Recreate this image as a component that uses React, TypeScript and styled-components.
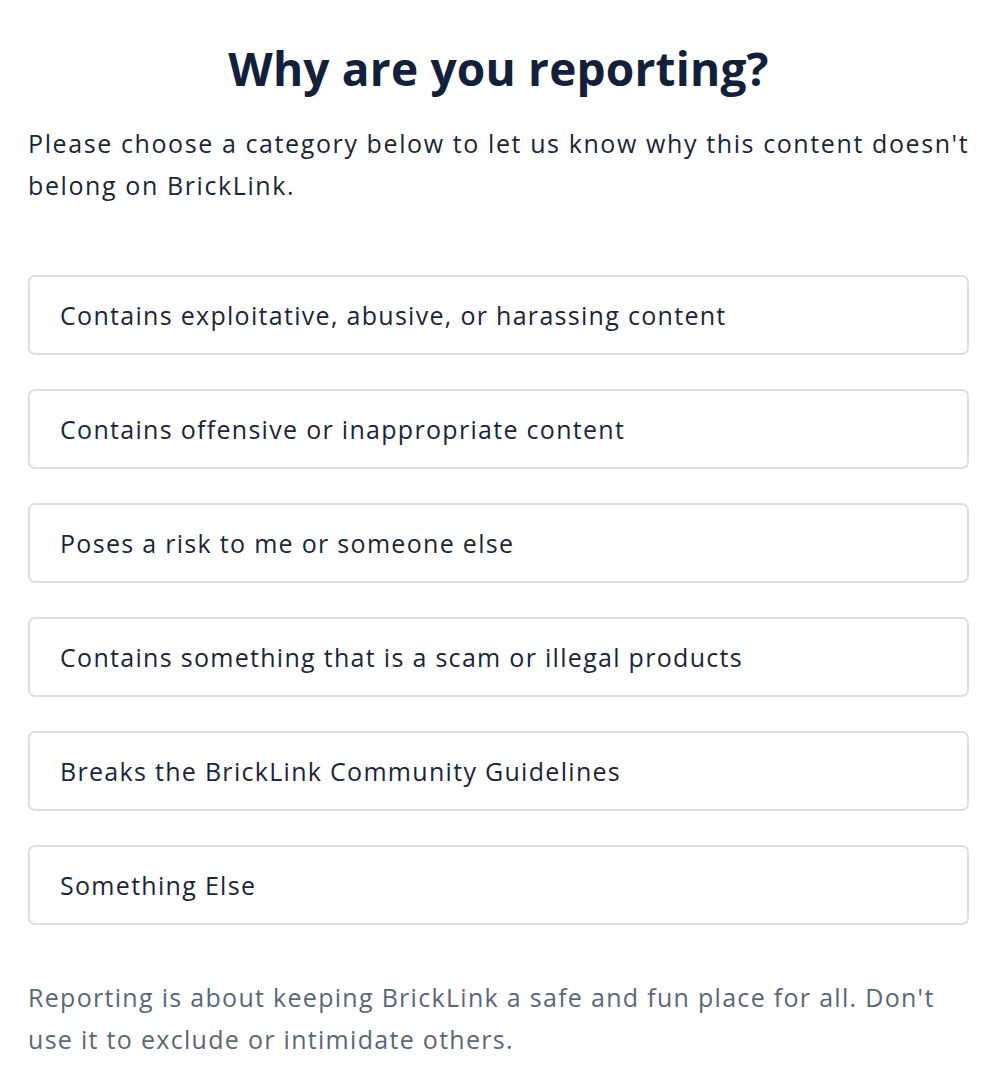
import React from "react";
import styled, { createGlobalStyle } from "styled-components";

const GlobalStyle = createGlobalStyle`
  html, body {
    margin: 0;
    padding: 0;
    background: #ffffff;
  }
  body {
    font-family: "Open Sans", "Noto Sans", sans-serif;
    -webkit-font-smoothing: antialiased;
  }
  * { box-sizing: border-box; }
`;

const Page = styled.main`
  width: 995px;
  padding: 40px 26px 0 28px;
  display: flex;
  flex-direction: column;
`;

const Title = styled.h1`
  margin: 0;
  text-align: center;
  font-size: 46px;
  line-height: 56px;
  font-weight: 700;
  color: #13203a;
  letter-spacing: 0.2px;
`;

const Intro = styled.p`
  margin: 26px -20px 0 0;
  font-size: 25px;
  line-height: 42px;
  letter-spacing: 1.6px;
  color: #1b2538;
`;

const OptionList = styled.div`
  margin-top: 69px;
  display: flex;
  flex-direction: column;
  gap: 34px;
`;

const OptionButton = styled.button`
  display: flex;
  align-items: center;
  width: 941px;
  height: 80px;
  padding: 0 30px;
  background: #ffffff;
  border: 2px solid #dfdfe3;
  border-radius: 7px;
  font-family: inherit;
  font-size: 25px;
  letter-spacing: 1.3px;
  color: #1b2538;
  text-align: left;
  cursor: pointer;
`;

const Footnote = styled.p`
  margin: 51px 0 0;
  font-size: 25px;
  line-height: 42px;
  letter-spacing: 1.3px;
  color: #5b6677;
`;

const reasons = [
  "Contains exploitative, abusive, or harassing content",
  "Contains offensive or inappropriate content",
  "Poses a risk to me or someone else",
  "Contains something that is a scam or illegal products",
  "Breaks the BrickLink Community Guidelines",
  "Something Else",
];

export default function App() {
  return (
    <>
      <GlobalStyle />
      <Page>
        <Title>Why are you reporting?</Title>
        <Intro>
          Please choose a category below to let us know why this content doesn't belong on BrickLink.
        </Intro>
        <OptionList>
          {reasons.map((r) => (
            <OptionButton key={r} type="button">
              {r}
            </OptionButton>
          ))}
        </OptionList>
        <Footnote>
          Reporting is about keeping BrickLink a safe and fun place for all. Don't use it to exclude or
          intimidate others.
        </Footnote>
      </Page>
    </>
  );
}
